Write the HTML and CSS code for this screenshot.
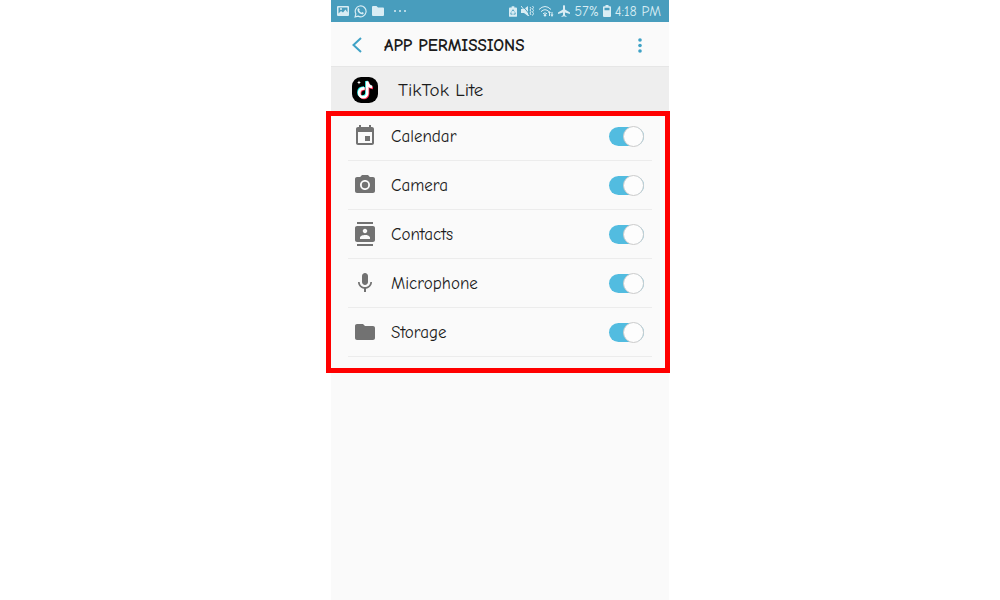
FILE: index.html
```html
<!DOCTYPE html>
<html lang="en">
<head>
    <meta charset="UTF-8">
    <meta name="viewport" content="width=device-width, initial-scale=1.0">
    <title>App permissions</title>
    <link rel="stylesheet" href="styles.css">
</head>
<body>
    <div class="phone">
        <div class="status-bar">
            <div class="status-left">
                <svg width="12" height="12" viewBox="0 0 12 12"><path fill-rule="evenodd" d="M1 1h10q1 0 1 1v8q0 1-1 1H1q-1 0-1-1V2q0-1 1-1zM1.500 2.500v6l2.500-2.500 2 1.500 2.500-3 2 3v-5zM3 3.200h2v1.600H3z"/></svg>
                <svg width="13" height="13" viewBox="0 0 24 24"><path fill="none" stroke="currentColor" stroke-width="2.200" d="M2 22l1.500-5.500A10 10 0 1 1 7.500 20.500z"/><path d="M7.500 6.500c1-1 2-.5 2.200.3l.8 2-1 1.500c1 2 2.300 3.200 4.200 4l1.400-1.500 2.600 1.300c.8 2-1.500 3.400-3 3.200-4.500-.8-8.200-5-8.300-8.300 0-1 .4-1.900 1.100-2.500z"/></svg>
                <svg width="12" height="12" viewBox="0 0 12 12"><path d="M1 1h3.500L6 2.500h5q1 0 1 1V10q0 1-1 1H1q-1 0-1-1V2q0-1 1-1z"/></svg>
                <svg class="dots" width="14" height="12" viewBox="0 0 14 12"><circle cx="2" cy="6" r="1"/><circle cx="7" cy="6" r="1"/><circle cx="12" cy="6" r="1"/></svg>
            </div>
            <div class="status-right">
                <svg width="8" height="11" viewBox="0 0 9 12"><path d="M3 0h3v1.500h2q1 0 1 1V11q0 1-1 1H1q-1 0-1-1V2.500q0-1 1-1h2z"/><path class="cut" d="M3 6l1.500-2L6 6M6.800 7L7 9H5M4 9H2l.3-2"/></svg>
                <svg width="13" height="12" viewBox="0 0 13 12"><path d="M0 4h3l4-3v10L3 8H0z"/><path class="cut" d="M1 0l8 10"/><path class="line" d="M0 1l8 10M9 2l1 1.500L9 5l1 1.500L9 8l1 2M11.500 1l1 1.500-1 1.500 1 1.500-1 1.500 1 1.500-1 2"/></svg>
                <svg width="16" height="12" viewBox="0 0 16 12"><path class="line" d="M1 4.500q6-6 12 0M3 6.700q4-4 8 0M5 8.800q2-2 4 0"/><circle cx="7" cy="10.200" r="1.200"/><path d="M10 8l1.500-2L13 8h-1v3h-1V8zM12.500 9.500h1V7h1v2.500h1L14 12z"/></svg>
                <svg width="12" height="12" viewBox="0 0 12 12"><path d="M5 1q1-2 2 0v3.500l5 3V9L7 7.500v2.700l1.500 1V12L6 11.300 3.500 12v-.8l1.500-1V7.500L0 9V7.500l5-3z"/></svg>
                <span>57%</span>
                <svg width="8" height="12" viewBox="0 0 8 12"><path fill-rule="evenodd" d="M2.500 0h3v1.200H7q1 0 1 1V11q0 1-1 1H1q-1 0-1-1V2.200q0-1 1-1h1.500zM1.500 2.700v2.500h5V2.700z"/></svg>
                <span>4:18 PM</span>
            </div>
        </div>

        <header class="header">
            <button class="back" aria-label="Back">
                <svg width="10" height="16" viewBox="0 0 10 16"><path d="M9 1L1.500 8 9 15"/></svg>
            </button>
            <h1>APP PERMISSIONS</h1>
            <button class="more" aria-label="More options">
                <svg width="4" height="15" viewBox="0 0 4 15"><circle cx="2" cy="2" r="1.800"/><circle cx="2" cy="7.500" r="1.800"/><circle cx="2" cy="13" r="1.800"/></svg>
            </button>
        </header>

        <div class="app">
            <svg width="26" height="26" viewBox="0 0 26 26">
                <rect width="26" height="26" rx="9"/>
                <g fill="none" stroke-width="2.700">
                    <path stroke="#25f4ee" d="M12 10.500q-5.500 0-5.500 5a4 4 0 0 0 8 0V4q.5 5 5 5.500"/>
                    <path stroke="#fe2c55" d="M13.500 12q-5.500 0-5.500 5a4 4 0 0 0 8 0V5.500q.5 5 5 5.500"/>
                    <path stroke="#fff" d="M12.700 11.300q-5.500-.2-5.500 4.900a4 4 0 0 0 8 0V4.500q.5 5 5 5.500"/>
                </g>
                <path fill="#fff" d="M7 3.500l.6 1.400 1.400.6-1.400.6L7 7.500l-.6-1.400L5 5.500l1.400-.6z"/>
            </svg>
            <h2>TikTok Lite</h2>
        </div>

        <ul class="permissions">
            <li>
                <label for="calendar">
                    <svg width="24" height="24" viewBox="0 0 24 24"><path d="M17 12h-5v5h5v-5zM16 1v2H8V1H6v2H5c-1.110 0-2 .9-2 2v14c0 1.100.89 2 2 2h14c1.100 0 2-.9 2-2V5c0-1.100-.9-2-2-2h-1V1h-2zm3 18H5V8h14v11z"/></svg>
                    Calendar
                </label>
                <input type="checkbox" class="switch" id="calendar" checked>
            </li>
            <li>
                <label for="camera">
                    <svg width="24" height="24" viewBox="0 0 24 24"><circle cx="12" cy="12" r="3.200"/><path d="M9 2L7.170 4H4c-1.100 0-2 .9-2 2v12c0 1.100.9 2 2 2h16c1.100 0 2-.9 2-2V6c0-1.100-.9-2-2-2h-3.170L15 2H9zm3 15c-2.760 0-5-2.240-5-5s2.240-5 5-5 5 2.240 5 5-2.240 5-5 5z"/></svg>
                    Camera
                </label>
                <input type="checkbox" class="switch" id="camera" checked>
            </li>
            <li>
                <label for="contacts">
                    <svg width="24" height="24" viewBox="0 0 24 24"><path d="M20 0H4v2h16V0zM4 24h16v-2H4v2zM20 4H4c-1.100 0-2 .9-2 2v12c0 1.100.9 2 2 2h16c1.100 0 2-.9 2-2V6c0-1.100-.9-2-2-2zm-8 2.750c1.240 0 2.250 1.010 2.250 2.250s-1.010 2.250-2.250 2.250S9.750 10.240 9.750 9 10.760 6.750 12 6.750zM17 17H7v-1.500c0-1.670 3.330-2.500 5-2.500s5 .83 5 2.500V17z"/></svg>
                    Contacts
                </label>
                <input type="checkbox" class="switch" id="contacts" checked>
            </li>
            <li>
                <label for="microphone">
                    <svg width="24" height="24" viewBox="0 0 24 24"><path d="M12 14c1.660 0 2.990-1.340 2.990-3L15 5c0-1.660-1.340-3-3-3S9 3.340 9 5v6c0 1.660 1.340 3 3 3zm5.300-3c0 3-2.540 5.100-5.300 5.100S6.700 14 6.700 11H5c0 3.410 2.720 6.230 6 6.720V21h2v-3.280c3.280-.48 6-3.300 6-6.720h-1.700z"/></svg>
                    Microphone
                </label>
                <input type="checkbox" class="switch" id="microphone" checked>
            </li>
            <li>
                <label for="storage">
                    <svg width="24" height="24" viewBox="0 0 24 24"><path d="M10 4H4c-1.100 0-1.990.9-1.990 2L2 18c0 1.100.9 2 2 2h16c1.100 0 2-.9 2-2V8c0-1.100-.9-2-2-2h-8l-2-2z"/></svg>
                    Storage
                </label>
                <input type="checkbox" class="switch" id="storage" checked>
            </li>
        </ul>
    </div>
</body>
</html>
```
FILE: styles.css
```css
*,
*::after {
    margin: 0;
    padding: 0;
    box-sizing: border-box;
}

:root {
    --blue: #489dbd;
    --accent: #3fa2c6;
    --switch: #52bce0;
    --background: #fafafa;
    --text: #1c1c1c;
    --icon: #727272;
    --border: #ececec;
}

body {
    background: #fff;
    color: var(--text);
    font-family: "Choco cooky", "Comic Neue", Lato, sans-serif;
}

svg {
    display: block;
    flex-shrink: 0;
}

.phone {
    width: 100%;
    max-width: 338px;
    min-height: 100vh;
    margin: 0 auto;
    background: var(--background);
}

.status-bar {
    display: flex;
    justify-content: space-between;
    height: 22px;
    padding: 0 8px 0 6px;
    background: var(--blue);
    color: #d9edf4;
    fill: currentColor;
    font-size: 14px;
}

.status-left,
.status-right {
    display: flex;
    align-items: center;
    gap: 5px;
}

.status-right {
    gap: 4px;
}

.dots {
    margin-left: 4px;
}

.line,
.cut {
    fill: none;
    stroke: currentColor;
}

.cut {
    stroke: var(--blue);
}

.header {
    display: flex;
    align-items: center;
    height: 45px;
    padding: 2px 17px 0 14px;
    border-bottom: 1px solid #e6e6e6;
}

.header button {
    display: flex;
    align-items: center;
    justify-content: center;
    width: 24px;
    height: 32px;
    border: none;
    background: none;
    cursor: pointer;
}

.header h1 {
    flex: 1;
    margin-left: 15px;
    font-size: 17px;
    font-weight: 700;
}

.back svg {
    fill: none;
    stroke: var(--accent);
    stroke-width: 2;
}

.more svg {
    fill: var(--accent);
}

.app {
    display: flex;
    align-items: center;
    gap: 20px;
    height: 44px;
    padding: 2px 21px 0;
    background: #eee;
}

.app h2 {
    font-size: 19px;
    font-weight: 400;
}

.permissions {
    position: relative;
    padding: 1px 17px 16px;
    list-style: none;
}

/* red frame around the list */
.permissions::after {
    content: "";
    position: absolute;
    inset: 0 -1px 0 -5px;
    border: 5px solid #f00;
    pointer-events: none;
}

.permissions li {
    display: flex;
    align-items: center;
    height: 49px;
    padding: 0 8px 0 5px;
    border-bottom: 1px solid var(--border);
}

.permissions label {
    display: flex;
    flex: 1;
    align-items: center;
    gap: 14px;
    font-size: 17px;
}

.permissions svg {
    fill: var(--icon);
}

.switch {
    position: relative;
    appearance: none;
    width: 35px;
    height: 19px;
    border-radius: 10px;
    background: #bbb;
    cursor: pointer;
}

.switch::after {
    content: "";
    position: absolute;
    top: -1px;
    left: 0;
    width: 21px;
    height: 21px;
    border: 1px solid #ccc;
    border-radius: 50%;
    background: #fdfdfd;
}

.switch:checked {
    background: var(--switch);
}

.switch:checked::after {
    left: auto;
    right: 0;
}
```
